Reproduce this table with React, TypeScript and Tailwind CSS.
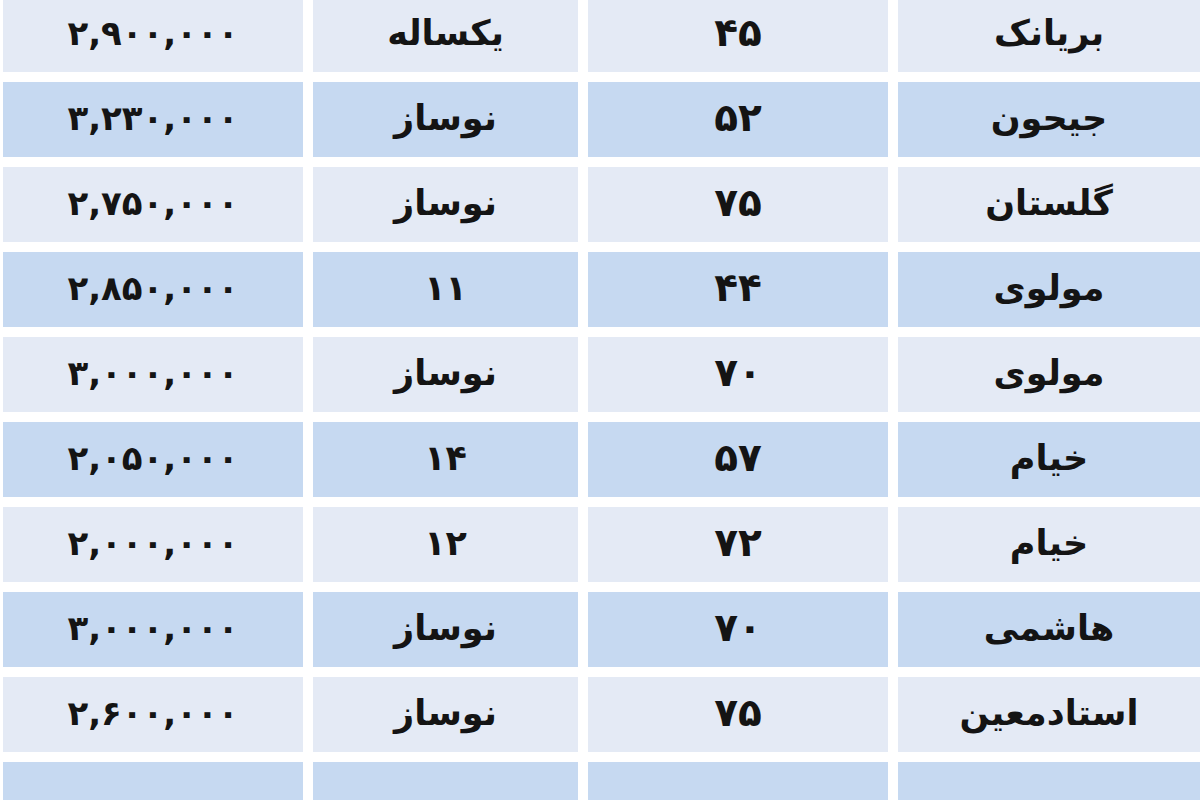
const rows = [
  { name: "بریانک", area: "۴۵", age: "یکساله", price: "۲,۹۰۰,۰۰۰" },
  { name: "جیحون", area: "۵۲", age: "نوساز", price: "۳,۲۳۰,۰۰۰" },
  { name: "گلستان", area: "۷۵", age: "نوساز", price: "۲,۷۵۰,۰۰۰" },
  { name: "مولوی", area: "۴۴", age: "۱۱", price: "۲,۸۵۰,۰۰۰" },
  { name: "مولوی", area: "۷۰", age: "نوساز", price: "۳,۰۰۰,۰۰۰" },
  { name: "خیام", area: "۵۷", age: "۱۴", price: "۲,۰۵۰,۰۰۰" },
  { name: "خیام", area: "۷۲", age: "۱۲", price: "۲,۰۰۰,۰۰۰" },
  { name: "هاشمی", area: "۷۰", age: "نوساز", price: "۳,۰۰۰,۰۰۰" },
  { name: "استادمعین", area: "۷۵", age: "نوساز", price: "۲,۶۰۰,۰۰۰" },
  { name: "", area: "", age: "", price: "" },
];

export default function App() {
  return (
    <div className="w-[1200px] h-[800px] overflow-hidden bg-white">
      <div
        className="mt-[-3px] pl-[3px] flex flex-col gap-y-[10px] font-bold text-[#141414] leading-none"
        style={{ fontFamily: '"DejaVu Sans", sans-serif' }}
      >
        {rows.map((row, i) => {
          // alternating row shading: light / excel blue
          const bg = i % 2 === 0 ? "bg-[#e4eaf5]" : "bg-[#c6d9f1]";
          return (
            <div key={i} className="grid grid-cols-[300px_265px_300px_302px] gap-x-[10px] h-[75px]">
              <div className={`${bg} flex items-center justify-center text-[34px] tracking-[-0.5px] pb-[4px]`}>{row.price}</div>
              <div dir="rtl" className={`${bg} flex items-center justify-center text-[35px] pb-[2px]`}>{row.age}</div>
              <div className={`${bg} flex items-center justify-center text-[39px] pb-[4px]`}>{row.area}</div>
              <div dir="rtl" className={`${bg} flex items-center justify-center text-[35px] pb-[2px]`}>{row.name}</div>
            </div>
          );
        })}
      </div>
    </div>
  );
}
